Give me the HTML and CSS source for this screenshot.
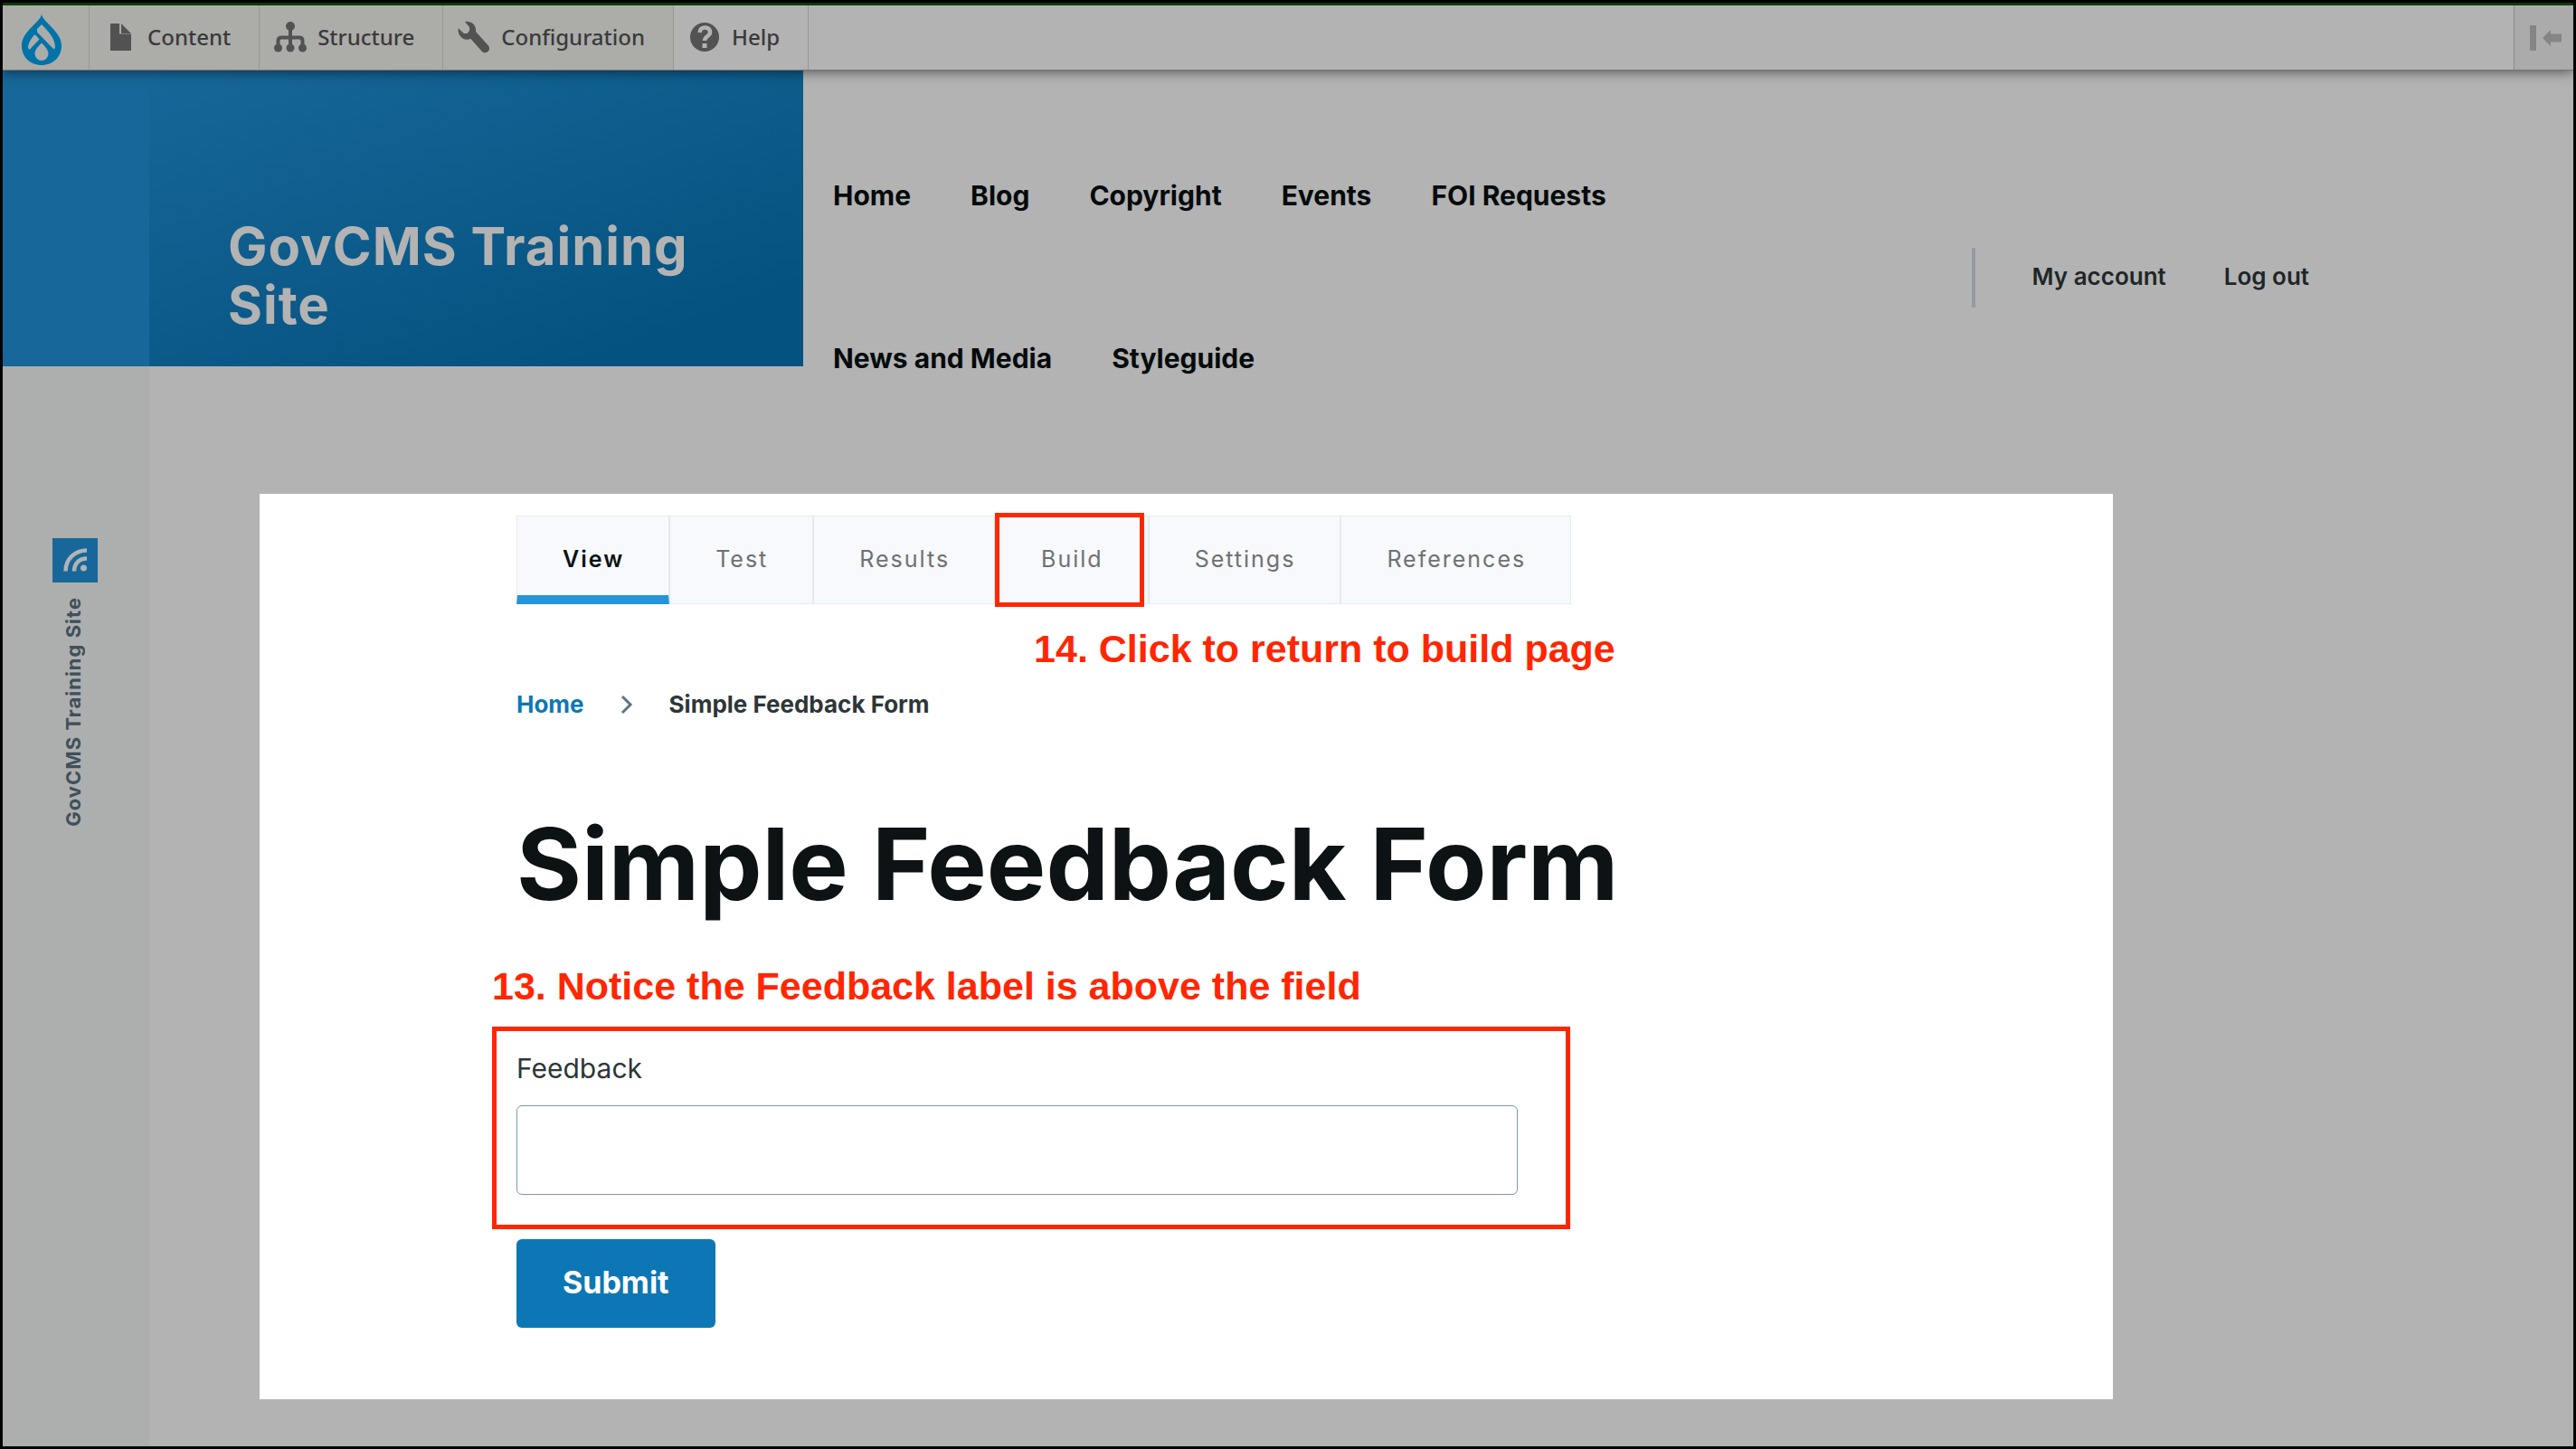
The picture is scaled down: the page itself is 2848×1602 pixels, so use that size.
FILE: index.html
```html
<!DOCTYPE html>
<html lang="en">
<head>
<meta charset="utf-8">
<title>Simple Feedback Form | GovCMS Training Site</title>
<link rel="stylesheet" href="styles.css">
</head>
<body>
<div class="toolbar">
  <a class="toolbar-home" href="#" aria-label="Home">
    <svg width="44" height="57" viewBox="0 0 44 57"><path fill="#0073a8" fill-rule="evenodd" d="M22 0C22 9 0 19 0 35.500C0 48 9.500 57 22 57S44 48 44 35.500C44 19 22 9 22 0ZM17 17L22 12C31 21 37 28 37 38L35.500 39.500L17 20.500ZM14.500 23L19.500 28.500L8.500 40L7 38C7 33 10 28 14.500 23ZM22 32.500C27 37.500 29.500 40.500 29.500 44.500A7.500 7.500 0 0 1 14.500 44.500C14.500 40.500 17 37.500 22 32.500Z"/></svg>
  </a>
  <a class="toolbar-item" href="#"><svg width="36" height="36" viewBox="0 0 36 36" fill="#525252"><path d="M7 3H17V14.500H30V33H7ZM19 3L30 14H19Z"/></svg>Content</a>
  <a class="toolbar-item" href="#"><svg width="36" height="36" viewBox="0 0 36 36" fill="#525252"><circle cx="18" cy="6" r="5"/><circle cx="4.500" cy="30" r="4.500"/><circle cx="18" cy="30" r="4.500"/><circle cx="31.500" cy="30" r="4.500"/><path d="M18 6V30M4.500 30V22Q4.500 18.500 8 18.500H28Q31.500 18.500 31.500 22V30" fill="none" stroke="#525252" stroke-width="4"/></svg>Structure</a>
  <a class="toolbar-item" href="#"><svg width="36" height="36" viewBox="0 0 36 36" fill="#525252"><path d="M8 1C14-.500 21 4 20 12L33.500 27A4.500 4.500 0 0 1 27 34L14.500 20C7 23 0 17 .500 9L1 8.500L7 14H10.500L13 11V7Z"/></svg>Configuration</a>
  <a class="toolbar-item toolbar-item-light" href="#"><svg width="36" height="36" viewBox="0 0 36 36"><circle cx="18" cy="18" r="16" fill="#525252"/><path d="M12.500 13Q13 7.500 18.500 7.500T24 13C24 17 18 17 18 22" fill="none" stroke="#b3b3b3" stroke-width="4.500"/><rect x="15.500" y="25" width="5" height="5" fill="#b3b3b3"/></svg>Help</a>
  <button class="toolbar-toggle" aria-label="Vertical orientation"><svg width="36" height="28" viewBox="0 0 36 28" fill="#858585"><path d="M0 0H7V28H0ZM14 14L23 5V9.500H35V18.500H23V23Z"/></svg></button>
</div>

<div class="page">
  <aside class="rail">
    <div class="rail-top"></div>
    <div class="rail-site">
      <svg width="50" height="49" viewBox="0 0 50 49"><path fill="#17679a" d="M0 0H50V49H0Z"/><g fill="none" stroke="#b3b3b3" stroke-width="4.500"><path d="M14.500 36.500C14.500 23 25 13.500 38 13.500M24 36.500C24 28 29.500 22.500 38 22.500"/></g><circle cx="34.500" cy="33" r="3.500" fill="#b3b3b3"/></svg>
      <span class="rail-text">GovCMS Training Site</span>
    </div>
  </aside>

  <div class="body">
    <header class="header">
      <a class="brand" href="#">GovCMS Training Site</a>
      <nav class="main-nav" aria-label="Main">
        <a href="#">Home</a><a href="#">Blog</a><a href="#">Copyright</a><a href="#">Events</a><a href="#">FOI Requests</a><a href="#">News and Media</a><a href="#">Styleguide</a>
      </nav>
      <nav class="account-nav" aria-label="Account">
        <a href="#">My account</a><a href="#">Log out</a>
      </nav>
    </header>

    <main class="panel">
      <nav class="tabs" aria-label="Tabs">
        <a class="tab tab-active" href="#">View</a>
        <a class="tab" href="#">Test</a>
        <a class="tab" href="#">Results</a>
        <a class="tab tab-marked" href="#">Build<span class="note tab-note">14. Click to return to build page</span></a>
        <a class="tab" href="#">Settings</a>
        <a class="tab" href="#">References</a>
      </nav>
      <nav class="breadcrumb" aria-label="Breadcrumb">
        <a href="#">Home</a>
        <svg width="14" height="22" viewBox="0 0 14 22"><path d="M2 2L11 11L2 20" fill="none" stroke="#5d7585" stroke-width="3"/></svg>
        <span>Simple Feedback Form</span>
      </nav>
      <h1>Simple Feedback Form</h1>
      <form class="form">
        <p class="note form-note">13. Notice the Feedback label is above the field</p>
        <div class="field">
          <label for="feedback">Feedback</label>
          <input id="feedback" type="text">
        </div>
        <button class="submit" type="button">Submit</button>
      </form>
    </main>
  </div>
</div>
</body>
</html>
```
FILE: styles.css
```css
* { box-sizing: border-box; }

body {
  margin: 0;
  min-height: 100vh;
  display: flex;
  flex-direction: column;
  border: 3px solid #000;
  background: #b3b3b3;
  color: #060b0c;
  font-family: Metropolis, Inter, sans-serif;
}

a { color: inherit; text-decoration: none; }
svg { display: block; flex: none; }

/* Admin toolbar */
.toolbar {
  position: relative;
  z-index: 1;
  display: flex;
  height: 75px;
  border-top: 3px solid #053d05;
  border-bottom: 1px solid #747474;
  box-shadow: 0 2px 12px rgba(0, 0, 0, 0.5);
  background: #b3b3b3;
  color: #3a3a3a;
  font: 500 24px/32px "Noto Sans", sans-serif;
}
.toolbar-home {
  width: 96px;
  padding: 9px 0 0 21px;
  background: #acaca9;
  border-right: 1px solid #979795;
}
.toolbar-item {
  display: flex;
  align-items: center;
  gap: 12px;
  padding: 0 31px 2px 16px;
  background: #acaca9;
  border-right: 1px solid #979795;
}
.toolbar-item-light { background: #b3b3b3; }
.toolbar-toggle {
  display: flex;
  align-items: center;
  margin-left: auto;
  width: 66px;
  padding: 0 0 0 17px;
  border: 0;
  border-left: 1px solid #8a8a8a;
  background: #ababab;
}

/* Page frame */
.page { flex: 1; display: flex; }
.rail { flex: none; width: 162px; background: #adafae; }
.rail-top { height: 327px; background: #17679a; }
.rail-site {
  display: flex;
  flex-direction: column;
  align-items: flex-start;
  gap: 16px;
  padding: 190px 0 0 55px;
}
.rail-text {
  width: 46px;
  writing-mode: vertical-rl;
  transform: rotate(180deg);
  color: #3f505b;
  font-size: 22px;
  font-weight: 700;
  line-height: 46px;
  letter-spacing: 1px;
}
.body { flex: 1; min-width: 0; }

/* Site header */
.header { display: flex; height: 468px; }
.brand {
  flex: none;
  width: 723px;
  height: 327px;
  padding: 162px 100px 0 87px;
  background: linear-gradient(160deg, #17679a, #04527f 85%);
  color: #b3b3b3;
  font-size: 58px;
  font-weight: 700;
  line-height: 65px;
  letter-spacing: 1px;
}
.main-nav {
  display: flex;
  flex-wrap: wrap;
  align-content: flex-start;
  gap: 0 66px;
  width: 960px;
  padding: 48px 0 0 33px;
  font-size: 30px;
  font-weight: 700;
  line-height: 180px;
}
.account-nav {
  display: flex;
  align-items: center;
  gap: 64px;
  height: 66px;
  margin: 196px 292px 0 auto;
  padding: 0 0 3px 63px;
  border-left: 4px solid #929ba1;
  color: #202627;
  font-size: 26px;
  font-weight: 600;
}

/* White content panel */
.panel {
  margin: 0 509px 0 122px;
  padding: 24px 0 79px 284px;
  background: #fff;
}
.tabs { display: flex; height: 98px; }
.tab {
  position: relative;
  padding: 0 49px 0 50px;
  border: 1px solid #e4ebef;
  background: #f7f9fc;
  color: #6e7172;
  font-size: 25px;
  line-height: 94px;
  letter-spacing: 2px;
}
.tab-active {
  border-bottom: 10px solid #2494db;
  color: #0d1214;
  font-weight: 600;
}
.tab-marked::after {
  content: "";
  position: absolute;
  inset: -4px 4px -4px -1px;
  border: 5px solid #ff2600;
}
.note {
  color: #ff2600;
  font: 700 43px/50px "Liberation Sans", Arial, sans-serif;
  letter-spacing: 0;
}
.tab-note {
  position: absolute;
  top: 121px;
  left: 42px;
  white-space: nowrap;
}
.breadcrumb {
  display: flex;
  align-items: center;
  gap: 40px;
  margin-top: 95px;
  color: #2e3637;
  font-size: 26px;
  font-weight: 700;
  line-height: 32px;
}
.breadcrumb a { color: #0d77b5; }
h1 {
  margin: 94px 0 0;
  color: #0d1214;
  font-size: 110px;
  font-weight: 700;
  line-height: 132px;
}
.form-note { margin: 44px 0 20px -27px; }
.field {
  display: flex;
  flex-direction: column;
  gap: 22px;
  width: 1192px;
  margin-left: -27px;
  padding: 22px 53px 33px 22px;
  border: 5px solid #ff2600;
  color: #2e3637;
}
.field label { font-size: 30px; line-height: 38px; }
.field input {
  height: 99px;
  padding: 0 30px;
  border: 1px solid #7a98ae;
  border-radius: 6px;
  background: #fff;
  font: inherit;
}
.submit {
  margin-top: 11px;
  height: 98px;
  padding: 0 51px 2px;
  border: 0;
  border-radius: 6px;
  background: #0d77b5;
  color: #fff;
  font: 700 34px/40px Metropolis, Inter, sans-serif;
}
```
